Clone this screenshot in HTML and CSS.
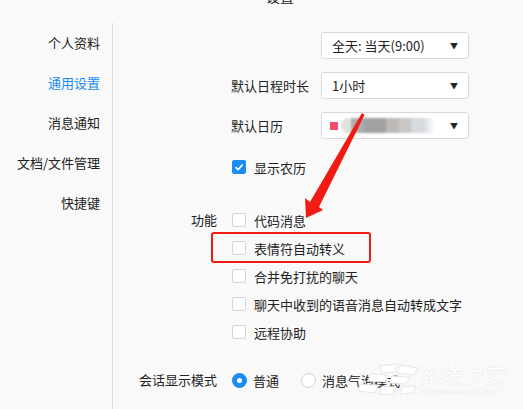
FILE: index.html
```html
<html lang="zh-CN">
<head>
    <link rel="stylesheet" href="styles.css">
</head>
<body>
    <div class='title'>设置</div>
    <div class='layout'>
        <div class='sidebar'>
            <div class='nav-item'>个人资料</div>
            <div class='nav-item active'>通用设置</div>
            <div class='nav-item'>消息通知</div>
            <div class='nav-item'>文档/文件管理</div>
            <div class='nav-item'>快捷键</div>
        </div>
        <div class='main'>
            <div class='selects'>
                <div class='select-row'>
                    <span class='select-label'></span>
                    <div class='select'><span>全天: 当天(9:00)</span><span class='caret'>▼</span></div>
                </div>
                <div class='select-row'>
                    <span class='select-label'>默认日程时长</span>
                    <div class='select'><span>1小时</span><span class='caret'>▼</span></div>
                </div>
                <div class='select-row'>
                    <span class='select-label'>默认日历</span>
                    <div class='select'>
                        <span class='cal'><span class='cal-dot'></span><span class='cal-blur'></span></span>
                        <span class='caret'>▼</span>
                    </div>
                </div>
            </div>

            <label class='check-row lunar'><span class='box checked'><svg viewBox="0 0 14 14" width="14" height="14"><path d="M3.5 7.2 L6 9.6 L10.6 4.6" fill="none" stroke="#fff" stroke-width="1.6"/></svg></span>显示农历</label>

            <div class='group'>
                <div class='group-label'>功能</div>
                <div class='options'>
                    <label class='check-row'><span class='box'></span>代码消息</label>
                    <label class='check-row'><span class='box'></span>表情符自动转义</label>
                    <label class='check-row'><span class='box'></span>合并免打扰的聊天</label>
                    <label class='check-row'><span class='box'></span>聊天中收到的语音消息自动转成文字</label>
                    <label class='check-row'><span class='box'></span>远程协助</label>
                </div>
            </div>

            <div class='group mode'>
                <div class='group-label'>会话显示模式</div>
                <div class='radios'>
                    <label class='radio-row'><span class='radio on'></span>普通</label>
                    <label class='radio-row'><span class='radio'></span>消息气泡模式</label>
                </div>
            </div>
        </div>
    </div>

    <div class='highlight'></div>
    <svg class='arrow' width="523" height="409" viewBox="0 0 523 409">
        <polygon points="362,113 364.5,115 319,207 323,210 306,218 305,198 310,202" fill="#f21b14"/>
    </svg>

    <div class='watermark'>
        <svg class='wm-logo' width="62" height="36" viewBox="0 0 62 36">
            <g fill="#fff" stroke="#dcdcdc" stroke-width="0.7">
                <path d="M22 4 L40 2 L36 10 L24 11 Z"/>
                <path d="M42 3 L60 6 L56 13 L39 11 Z"/>
                <path d="M12 12 L30 13 L27 20 L10 19 Z"/>
                <path d="M34 14 L52 15 L48 22 L31 21 Z"/>
                <path d="M2 22 L20 23 L17 31 L0 29 Z"/>
                <path d="M24 24 L38 25 L35 33 L21 32 Z"/>
                <path d="M44 25 L58 24 L55 31 L42 32 Z"/>
            </g>
        </svg>
        <div class='wm-text'>
            <div class='wm-name'>系统之家</div>
            <div class='wm-url'>XITONGZHIJIA.NET</div>
        </div>
    </div>
</body>
</html>
```

FILE: styles.css
```css
body {
    font-family: "Noto Sans CJK SC", "Microsoft YaHei", sans-serif;
    font-size: 13px;
    color: #222;
    background-color: #f9f9f9;
    margin: 0;
    padding: 0;
    width: 523px;
    height: 409px;
    overflow: hidden;
    position: relative;
}
.title {
    font-size: 14px;
    line-height: 18px;
    height: 18px;
    margin-top: -13px;
    margin-bottom: 18px;
    padding-left: 266px;
}
.layout {
    display: flex;
}
.sidebar {
    width: 100px;
    padding-right: 12px;
    border-right: 1px solid #d6dee8;
    height: 400px;
    text-align: right;
}
.nav-item {
    line-height: 40px;
    height: 40px;
}
.nav-item.active {
    color: #1a8cf4;
}
.main {
    padding-top: 9px;
    flex: 1;
}
.selects {
    display: flex;
    flex-direction: column;
    gap: 13px;
    padding-left: 118px;
}
.select-row {
    display: flex;
    align-items: center;
}
.select-label {
    width: 90px;
}
.select {
    width: 148px;
    height: 27px;
    box-sizing: border-box;
    background-color: #fff;
    border: 1px solid #d9d9d9;
    border-radius: 3px;
    display: flex;
    align-items: center;
    justify-content: space-between;
    padding: 0 10px 0 10px;
}
.caret {
    font-size: 8px;
    color: #222;
}
.cal {
    display: flex;
    align-items: center;
    gap: 3px;
}
.cal-dot {
    width: 8px;
    height: 8px;
    background-color: #f0506e;
    margin-left: -2px;
}
.cal-blur {
    width: 94px;
    height: 15px;
    background: linear-gradient(to right, #e4e1dc 0, #e4e1dc 10px, #a9adb0 10px, #a9adb0 23px, #a1a1a4 23px, #a1a1a4 45px, #bcb9b6 45px, #bcb9b6 58px, #c9c6c3 58px, #c9c6c3 70px, #d6d9dd 70px, #d6d9dd 82px, #fff 94px);
    filter: blur(1px);
    border-radius: 7px 0 0 7px;
}
.check-row {
    display: flex;
    align-items: center;
    gap: 8px;
    height: 28px;
}
.lunar {
    height: 20px;
    margin-top: 18px;
    margin-left: 119px;
}
.box {
    width: 14px;
    height: 14px;
    box-sizing: border-box;
    border: 1px solid #d6d6d6;
    border-radius: 2px;
    background-color: #fff;
    display: block;
}
.box.checked {
    background-color: #1a8cf4;
    border-color: #1a8cf4;
}
.box svg {
    display: block;
    margin: -1px;
}
.group {
    display: grid;
    grid-template-columns: 104px 1fr;
    column-gap: 14px;
    margin-top: 29px;
}
.group-label {
    text-align: right;
    line-height: 28px;
}
.options {
    display: flex;
    flex-direction: column;
    padding-left: 1px;
}
.mode {
    margin-top: 20px;
}
.radios {
    display: flex;
    gap: 22px;
    padding-left: 1px;
}
.radio-row {
    display: flex;
    align-items: center;
    gap: 6px;
    height: 28px;
}
.radio {
    width: 15px;
    height: 15px;
    box-sizing: border-box;
    border-radius: 50%;
    border: 1px solid #d0d0d0;
    background-color: #fff;
    display: block;
}
.radio.on {
    border: 5px solid #1a8cf4;
}
.highlight {
    position: absolute;
    left: 211px;
    top: 232px;
    width: 160px;
    height: 31px;
    box-sizing: border-box;
    border: 2px solid #f21b14;
    border-radius: 3px;
}
.arrow {
    position: absolute;
    left: 0;
    top: 0;
}
.watermark {
    position: absolute;
    left: 358px;
    top: 360px;
    display: flex;
    gap: 0;
    color: #fff;
}
.wm-logo {
    margin-top: 2px;
}
.wm-name {
    font-size: 22px;
    line-height: 28px;
    text-shadow: 0 0 1px #cfcfcf;
}
.wm-url {
    font-family: "Liberation Serif", serif;
    font-size: 7px;
    letter-spacing: 1px;
    text-shadow: 0 0 1px #cfcfcf;
}
```
